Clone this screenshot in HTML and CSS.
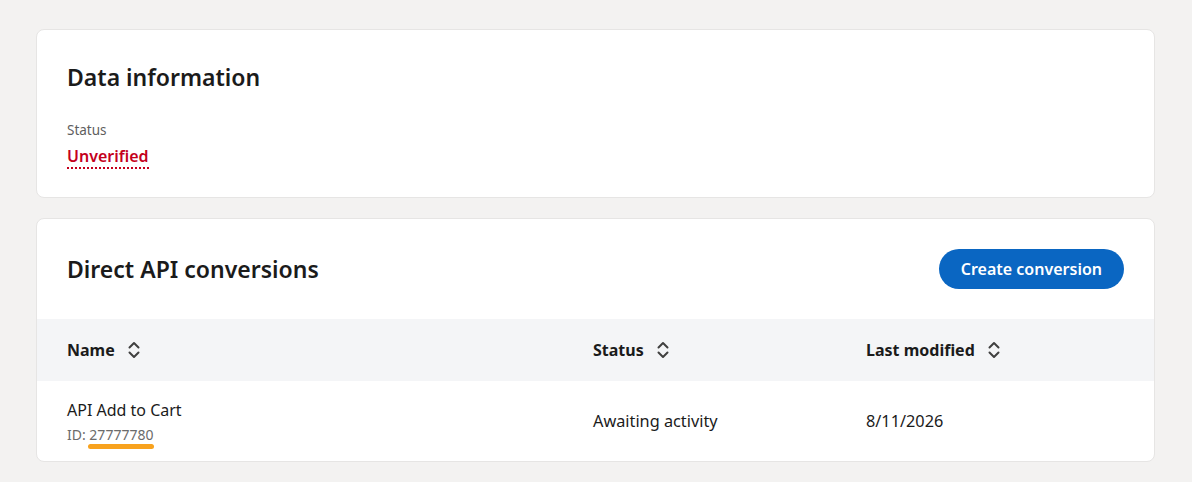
FILE: index.html
```html
<!DOCTYPE html>
<html lang="en">
<head>
<meta charset="utf-8">
<title>Data information</title>
<link rel="stylesheet" href="styles.css">
</head>
<body>
<main class="page">
  <section class="card info-card">
    <h2 class="card-title">Data information</h2>
    <div class="field">
      <div class="field-label">Status</div>
      <div class="field-value unverified">Unverified</div>
    </div>
  </section>

  <section class="card conv-card">
    <div class="conv-head">
      <h2 class="card-title">Direct API conversions</h2>
      <button class="btn-primary" type="button">Create conversion</button>
    </div>
    <div class="table">
      <div class="trow thead">
        <div class="cell"><span>Name</span><svg class="sort" viewBox="0 0 12 18" width="12" height="18"><path d="M1.5 6.5 L6 2 L10.5 6.5 M1.5 11.5 L6 16 L10.5 11.5" fill="none" stroke="#404040" stroke-width="2" stroke-linecap="round" stroke-linejoin="round"/></svg></div>
        <div class="cell"><span>Status</span><svg class="sort" viewBox="0 0 12 18" width="12" height="18"><path d="M1.5 6.5 L6 2 L10.5 6.5 M1.5 11.5 L6 16 L10.5 11.5" fill="none" stroke="#404040" stroke-width="2" stroke-linecap="round" stroke-linejoin="round"/></svg></div>
        <div class="cell"><span>Last modified</span><svg class="sort" viewBox="0 0 12 18" width="12" height="18"><path d="M1.5 6.5 L6 2 L10.5 6.5 M1.5 11.5 L6 16 L10.5 11.5" fill="none" stroke="#404040" stroke-width="2" stroke-linecap="round" stroke-linejoin="round"/></svg></div>
      </div>
      <div class="trow tbody">
        <div class="cell name-cell">
          <div class="conv-name">API Add to Cart</div>
          <div class="conv-id">ID: <span class="id-num">27777780</span></div>
        </div>
        <div class="cell">Awaiting activity</div>
        <div class="cell">8/11/2026</div>
      </div>
    </div>
  </section>
</main>
</body>
</html>
```

FILE: styles.css
```css
* { box-sizing: border-box; }
html, body { margin: 0; padding: 0; }
body {
  background: #f3f2f1;
  font-family: "Noto Sans", "Open Sans", "Liberation Sans", sans-serif;
  color: #1b1b1b;
}
.page {
  padding: 29px 37px 20px 36px;
  display: flex;
  flex-direction: column;
  gap: 20px;
}
.card {
  background: #fff;
  border: 1px solid #e6e5e4;
  border-radius: 8px;
  overflow: hidden;
}
.card-title {
  margin: 0;
  font-size: 23px;
  line-height: 32px;
  font-weight: 600;
  color: #1b1b1b;
}
.info-card {
  padding: 31px 30px 28px;
}
.field { margin-top: 27px; }
.field-label {
  font-size: 13.5px;
  line-height: 20px;
  color: #5e5e5e;
}
.field-value {
  margin-top: 6px;
  font-size: 16px;
  line-height: 20px;
  font-weight: 600;
}
.unverified {
  display: inline-block;
  color: #c4001c;
  border-bottom: 2px dotted #c4001c;
  padding-bottom: 1px;
}
.conv-head {
  display: flex;
  align-items: center;
  justify-content: space-between;
  padding: 30px;
}
.btn-primary {
  height: 40px;
  padding: 0 22px;
  border: none;
  border-radius: 20px;
  background: #0a66c2;
  color: #fff;
  font-family: inherit;
  font-size: 16px;
  font-weight: 600;
}
.trow {
  display: grid;
  grid-template-columns: 526px 273px 1fr;
}
.thead {
  background: #f4f5f7;
  height: 62px;
  align-items: center;
  font-weight: 700;
  font-size: 16px;
}
.thead .cell {
  display: flex;
  align-items: center;
  gap: 13px;
}
.cell { padding-left: 30px; }
.sort { display: block; }
.tbody {
  height: 80px;
  align-items: center;
  font-size: 16.3px;
  color: #1b1b1b;
}
.conv-name {
  font-size: 16px;
  line-height: 24px;
}
.conv-id {
  margin-top: 3px;
  font-size: 14px;
  line-height: 20px;
  color: #6b6b6b;
}
.id-num {
  position: relative;
}
.id-num::after {
  content: "";
  position: absolute;
  left: -1px;
  right: -1px;
  bottom: -5px;
  height: 5px;
  border-radius: 3px;
  background: #f8a21e;
}
```
